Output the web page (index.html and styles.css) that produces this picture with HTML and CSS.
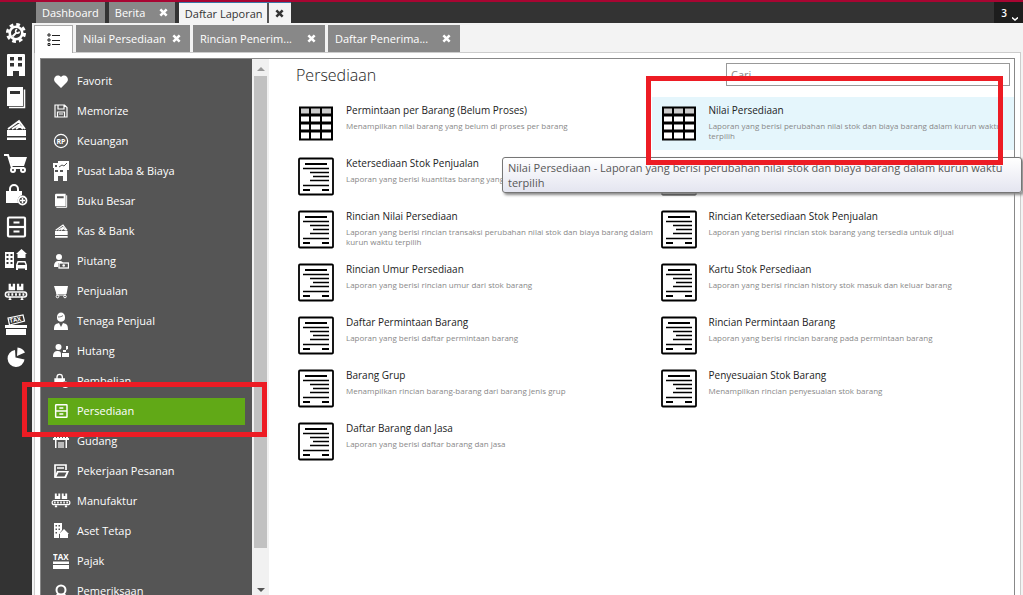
FILE: index.html
```html
<!DOCTYPE html>
<html lang="id">
<head>
<meta charset="utf-8">
<title>Daftar Laporan - Persediaan</title>
<link rel="stylesheet" href="styles.css">
</head>
<body>
<svg class="sprite" aria-hidden="true">
  <symbol id="gear" viewBox="0 0 24 24"><circle cx="12" cy="12" r="8.500" fill="none" stroke="currentColor" stroke-width="3" stroke-dasharray="3.700 2.975"/><circle cx="12" cy="12" r="6.300" fill="none" stroke="currentColor" stroke-width="2.600"/><path d="M8.500 15.500l4-4" fill="none" stroke="currentColor" stroke-width="2"/><path d="M15.500 10.500a2 2 0 1 1-2.300-2.300" fill="none" stroke="currentColor" stroke-width="1.600"/></symbol>
  <symbol id="building" viewBox="0 0 24 24"><path fill="currentColor" fill-rule="evenodd" d="M4 1h16q1 0 1 1v21h-6v-5H9v5H3V2q0-1 1-1zM6 4v3.500h4V4zm8 0v3.500h4V4zm-8 6v3.500h4V10zm8 0v3.500h4V10z"/></symbol>
  <symbol id="book" viewBox="0 0 24 24"><path fill="currentColor" fill-rule="evenodd" d="M5 1h14v19H3V3q0-2 2-2zm1 4v3h10V5z"/><path d="M20.500 3.500V21.500H5" fill="none" stroke="currentColor" stroke-width="1.500"/></symbol>
  <symbol id="cash" viewBox="0 0 24 24"><path fill="currentColor" d="M3 12h19v6H3zM3 19.500h19V22H3z"/><path d="M4 11l11-8 6 8M8 11l8-5M12 11l4-3 3 3" fill="none" stroke="currentColor" stroke-width="1.800"/></symbol>
  <symbol id="cart" viewBox="0 0 24 24"><path fill="currentColor" d="M5 6h18l-3 9H8z"/><path d="M0 4h4l4 13h12" fill="none" stroke="currentColor" stroke-width="2"/><circle cx="9" cy="19" r="2" fill="none" stroke="currentColor" stroke-width="2"/><circle cx="19" cy="19" r="2" fill="none" stroke="currentColor" stroke-width="2"/></symbol>
  <symbol id="bag" viewBox="0 0 24 24"><path fill="currentColor" d="M2 8h16v4a6 6 0 0 0-4 8H2z"/><path d="M6 9V6a4 4 0 0 1 8 0v3" fill="none" stroke="currentColor" stroke-width="2"/><circle cx="18.500" cy="17.500" r="4" fill="none" stroke="currentColor" stroke-width="1.800"/><path d="M18.500 15v5M16 17.500h5" stroke="currentColor" stroke-width="1.500"/></symbol>
  <symbol id="cabinet" viewBox="0 0 24 24"><g fill="none" stroke="currentColor"><rect x="4" y="2.500" width="17" height="19" rx="1" stroke-width="2.200"/><path d="M4 12h17" stroke-width="2.200"/><path d="M9.500 7.500h6M9.500 16.500h6" stroke-width="2"/></g></symbol>
  <symbol id="assets" viewBox="0 0 24 24"><path fill="currentColor" fill-rule="evenodd" d="M1 4h9v16H1zM2.500 6v2h2V6zm4 0v2h2V6zm-4 4v2h2v-2zm4 0v2h2v-2zm-4 4v2h2v-2zm4 0v2h2v-2zM17.500 1L23 6h-1.500v4h-8V6H12zM13.500 13h8l1.500 4v5h-2v-1.500h-7V22h-2v-5zm1 1.500l-1 2.500h8l-1-2.500z"/></symbol>
  <symbol id="conveyor" viewBox="0 0 26 24"><path fill="currentColor" d="M5 3h2.500v3h2V3H12v7H5zM14 3h2.500v3h2V3H21v7h-7z"/><rect x="1.500" y="12" width="23" height="5.500" rx="2.700" fill="none" stroke="currentColor" stroke-width="1.600"/><path d="M4 14.700h19" stroke="currentColor" stroke-width="2.600" stroke-dasharray="2 2"/><path d="M5 20h3M18 20h3M6.500 17v3M19.500 17v3" stroke="currentColor" stroke-width="1.500"/></symbol>
  <symbol id="taxbox" viewBox="0 0 24 24"><path d="M4 5l15-3 1.500 6-15 4z" fill="none" stroke="currentColor" stroke-width="1.200"/><text x="6" y="10" class="glyph-text" transform="rotate(-12 6 10)" font-size="6">TAX</text><path fill="currentColor" d="M1 12h22v3H1zM2 16h20v6H2z"/></symbol>
  <symbol id="pie" viewBox="0 0 24 24"><path fill="currentColor" d="M11 5a8.500 8.500 0 1 0 9.500 9.500l-9-2zM13.500 2.500a9 9 0 0 1 7.500 5l-8 3.500z"/></symbol>
  <symbol id="heart" viewBox="0 0 16 16"><path fill="currentColor" d="M8 15L2 9C-1 5 4 0 8 4c4-4 9 1 6 5z"/></symbol>
  <symbol id="floppy" viewBox="0 0 16 16"><path d="M2 2h9.500L14 4.500V14H2zM5 2v4h6V2M4.500 14V9h7v5M6 11h4" fill="none" stroke="currentColor" stroke-width="1.200"/></symbol>
  <symbol id="rupiah" viewBox="0 0 16 16"><circle cx="8" cy="8" r="6.600" fill="none" stroke="currentColor" stroke-width="1.200"/><text x="3.500" y="10.500" class="glyph-text" font-size="7">RP</text></symbol>
  <symbol id="profit" viewBox="0 0 16 20"><path fill="currentColor" fill-rule="evenodd" d="M0 2h5V0h11v9h-2v11h-4v-5H5v5H1V7H0zM2 4v2h2V4zm0 5v2h3V9zm5 0v2h3V9z"/><path d="M6 6l3-2 2 1 3-3" fill="none" stroke="#555" stroke-width="1"/></symbol>
  <symbol id="receive" viewBox="0 0 16 16"><circle cx="6" cy="4" r="3" fill="currentColor"/><path fill="currentColor" d="M1 14c0-5 2-6 5-6 2 0 3 0 4 2H5v4z"/><rect x="6" y="10" width="9.500" height="5" fill="none" stroke="currentColor" stroke-width="1.300"/><circle cx="10.700" cy="12.500" r="1.300" fill="currentColor"/></symbol>
  <symbol id="basket" viewBox="0 0 16 16"><path fill="currentColor" d="M1 3h14l-1.500 8H3.500z"/><path d="M3 4l1 8h9" fill="none" stroke="currentColor"/><circle cx="4.500" cy="13.500" r="1.300" fill="none" stroke="currentColor"/><circle cx="12" cy="13.500" r="1.300" fill="none" stroke="currentColor"/></symbol>
  <symbol id="agent" viewBox="0 0 16 18"><path fill="currentColor" d="M4 5c0-6 8-6 8 0v1c0 5-8 5-8 0zM1 18c0-5 1-6 5-7l2 4 2-4c4 1 5 2 5 7z"/><path d="M5 5c2 0 4-.500 5-1.500" fill="none" stroke="#555" stroke-width=".8"/></symbol>
  <symbol id="debt" viewBox="0 0 16 16"><circle cx="5.500" cy="4" r="3" fill="currentColor"/><path fill="currentColor" d="M0 14c0-5 2-6 5-6 2 0 3 1 3 3v3zM9 10h7v4H9zM10 7h3v2h-3zM13 3h2v3l-2 1z"/></symbol>
  <symbol id="garage" viewBox="0 0 16 16"><path d="M1 3.500h14" stroke="currentColor" stroke-width="3" stroke-dasharray="2 1"/><path d="M0 5h16v2H0zM2 7h1.500v8H2zM12.500 7H14v8h-1.500z" fill="currentColor"/><path d="M5 9h6v6H5z" fill="#bbb"/></symbol>
  <symbol id="folder" viewBox="0 0 16 16"><path d="M2 14V2h11v5M4 5h7" fill="none" stroke="currentColor" stroke-width="1.700"/><path fill="currentColor" fill-rule="evenodd" d="M4 8h12l-3 7H1zm1.500 1.500L3.500 13.500h8l2-4z"/></symbol>
  <symbol id="house" viewBox="0 0 16 16"><path fill="currentColor" fill-rule="evenodd" d="M1 0h8v7l-3 4v4H1zM2.500 2v1.500H4V2zm3 0v1.500H7V2zm-3 3.500V7H4V5.500zm3 0V7H7V5.500zm-3 3.500v1.500H4V9zM11 6l5 5h-1v4H7v-4H6z"/></symbol>
  <symbol id="tax" viewBox="0 0 16 16"><text x="0" y="7" class="glyph-text" font-size="8">TAX</text><path fill="currentColor" d="M0 8.500h16V11H0zM0 12h16v4H0z"/></symbol>
  <symbol id="lens" viewBox="0 0 16 16"><circle cx="8" cy="7" r="4.500" fill="none" stroke="currentColor" stroke-width="2"/><path d="M5 11l-3 4M11 11l3 4" stroke="currentColor" stroke-width="2"/></symbol>
  <symbol id="close" viewBox="0 0 10 10"><path d="M1.500 1.500l7 7M8.500 1.500l-7 7" stroke="currentColor" stroke-width="2.800"/></symbol>
  <symbol id="list" viewBox="0 0 14 14"><path d="M5 2.500h8M5 7.500h8M5 11.500h8" stroke="currentColor"/><path d="M1 1h2v2H1zM1 6h2v2H1zM1 10.500h2v2H1z" fill="none" stroke="currentColor"/></symbol>
  <symbol id="table" viewBox="0 0 36 38"><path fill="#000" d="M1 2h34v34H1z"/><path fill="#ccc" d="M3 4h8v5H3zM13 4h9v5h-9zM24 4h9v5h-9z"/><path fill="#fff" d="M3 12h8v5H3zM13 12h9v5h-9zM24 12h9v5h-9zM3 20h8v5H3zM13 20h9v5h-9zM24 20h9v5h-9zM3 28h8v6H3zM13 28h9v6h-9zM24 28h9v6h-9z"/></symbol>
  <symbol id="doc" viewBox="0 0 36 38"><rect x="1" y="1" width="34" height="36" rx="1" fill="#fff" stroke="#000" stroke-width="1.800"/><path d="M7 6.500h22M5 32.500h7M24 32.500h7" stroke="#000" stroke-width="2"/><path d="M5 11h26M12 15h19M15 19h16M12 23h19M5 28h26" stroke="#000" stroke-width="1.500"/></symbol>
</svg>

<div class="app">
  <header class="topbar">
    <nav class="tabs" aria-label="Halaman">
      <div class="tab"><button class="tab-label">Dashboard</button></div>
      <div class="tab tab-wide"><button class="tab-label">Berita</button><button class="tab-close" aria-label="Tutup Berita"><svg><use href="#close"/></svg></button></div>
      <div class="tab tab-active"><button class="tab-label">Daftar Laporan</button><button class="tab-close" aria-label="Tutup Daftar Laporan"><svg><use href="#close"/></svg></button></div>
    </nav>
    <button class="counter">3<svg class="chevron" viewBox="0 0 6 4"><path d="M0 .5l3 2.500 3-2.500" fill="none" stroke="currentColor" stroke-width="1.500"/></svg></button>
  </header>

  <div class="body">
    <nav class="rail" aria-label="Modul">
      <div class="rail-items">
        <button aria-label="Pengaturan"><svg><use href="#gear"/></svg></button>
        <button aria-label="Perusahaan"><svg><use href="#building"/></svg></button>
        <button aria-label="Buku Besar"><svg><use href="#book"/></svg></button>
        <button aria-label="Kas dan Bank"><svg><use href="#cash"/></svg></button>
        <button aria-label="Penjualan"><svg><use href="#cart"/></svg></button>
        <button aria-label="Pembelian"><svg><use href="#bag"/></svg></button>
        <button aria-label="Persediaan"><svg><use href="#cabinet"/></svg></button>
        <button aria-label="Aset Tetap"><svg><use href="#assets"/></svg></button>
        <button aria-label="Manufaktur"><svg><use href="#conveyor"/></svg></button>
        <button aria-label="Pajak"><svg><use href="#taxbox"/></svg></button>
        <button aria-label="Laporan"><svg><use href="#pie"/></svg></button>
      </div>
    </nav>

    <main class="workspace">
      <div class="subtabs">
        <button class="subtab-list" aria-label="Daftar"><svg><use href="#list"/></svg></button>
        <div class="subtab subtab-short"><button class="tab-label">Nilai Persediaan</button><button class="tab-close" aria-label="Tutup"><svg><use href="#close"/></svg></button></div>
        <div class="subtab"><button class="tab-label">Rincian Penerim...</button><button class="tab-close" aria-label="Tutup"><svg><use href="#close"/></svg></button></div>
        <div class="subtab"><button class="tab-label">Daftar Penerima...</button><button class="tab-close" aria-label="Tutup"><svg><use href="#close"/></svg></button></div>
      </div>

      <div class="sheet">
        <div class="panel">
          <nav class="menu" aria-label="Kategori laporan">
            <a href="#favorit"><svg><use href="#heart"/></svg>Favorit</a>
            <a href="#memorize"><svg><use href="#floppy"/></svg>Memorize</a>
            <a href="#keuangan"><svg><use href="#rupiah"/></svg>Keuangan</a>
            <a href="#laba"><svg class="tall"><use href="#profit"/></svg>Pusat Laba &amp; Biaya</a>
            <a href="#buku"><svg><use href="#book"/></svg>Buku Besar</a>
            <a href="#kas"><svg><use href="#cash"/></svg>Kas &amp; Bank</a>
            <a href="#piutang"><svg><use href="#receive"/></svg>Piutang</a>
            <a href="#penjualan"><svg><use href="#basket"/></svg>Penjualan</a>
            <a href="#tenaga"><svg class="tall"><use href="#agent"/></svg>Tenaga Penjual</a>
            <a href="#hutang"><svg><use href="#debt"/></svg>Hutang</a>
            <a href="#pembelian"><svg><use href="#bag"/></svg>Pembelian</a>
            <a href="#persediaan" class="current" aria-current="page"><svg><use href="#cabinet"/></svg>Persediaan</a>
            <a href="#gudang"><svg><use href="#garage"/></svg>Gudang</a>
            <a href="#pekerjaan"><svg><use href="#folder"/></svg>Pekerjaan Pesanan</a>
            <a href="#manufaktur"><svg class="broad"><use href="#conveyor"/></svg>Manufaktur</a>
            <a href="#aset"><svg><use href="#house"/></svg>Aset Tetap</a>
            <a href="#pajak"><svg><use href="#tax"/></svg>Pajak</a>
            <a href="#pemeriksaan"><svg><use href="#lens"/></svg>Pemeriksaan</a>
          </nav>
          <div class="scrollbar" aria-hidden="true"><span class="arrow up"></span><span class="thumb"></span><span class="arrow down"></span></div>

          <section class="reports">
            <div class="reports-head">
              <h1>Persediaan</h1>
              <input class="search" type="search" placeholder="Cari..." aria-label="Cari">
            </div>
            <div class="grid">
              <a class="report" href="#r1"><svg><use href="#table"/></svg><div><h2>Permintaan per Barang (Belum Proses)</h2><p>Menampilkan nilai barang yang belum di proses per barang</p></div></a>
              <a class="report hover" href="#r2"><svg><use href="#table"/></svg><div><h2>Nilai Persediaan</h2><p>Laporan yang berisi perubahan nilai stok dan biaya barang dalam kurun waktu terpilih</p></div></a>
              <a class="report" href="#r3"><svg><use href="#doc"/></svg><div><h2>Ketersediaan Stok Penjualan</h2><p>Laporan yang berisi kuantitas barang yang</p></div></a>
              <a class="report" href="#r4" aria-label="Laporan persediaan"><svg><use href="#doc"/></svg></a>
              <a class="report" href="#r5"><svg><use href="#doc"/></svg><div><h2>Rincian Nilai Persediaan</h2><p>Laporan yang berisi rincian transaksi perubahan nilai stok dan biaya barang dalam kurun waktu terpilih</p></div></a>
              <a class="report" href="#r6"><svg><use href="#doc"/></svg><div><h2>Rincian Ketersediaan Stok Penjualan</h2><p>Laporan yang berisi rincian stok barang yang tersedia untuk dijual</p></div></a>
              <a class="report" href="#r7"><svg><use href="#doc"/></svg><div><h2>Rincian Umur Persediaan</h2><p>Laporan yang berisi rincian umur dari stok barang</p></div></a>
              <a class="report" href="#r8"><svg><use href="#doc"/></svg><div><h2>Kartu Stok Persediaan</h2><p>Laporan yang berisi rincian history stok masuk dan keluar barang</p></div></a>
              <a class="report" href="#r9"><svg><use href="#doc"/></svg><div><h2>Daftar Permintaan Barang</h2><p>Laporan yang berisi daftar permintaan barang</p></div></a>
              <a class="report" href="#r10"><svg><use href="#doc"/></svg><div><h2>Rincian Permintaan Barang</h2><p>Laporan yang berisi rincian barang pada permintaan barang</p></div></a>
              <a class="report" href="#r11"><svg><use href="#doc"/></svg><div><h2>Barang Grup</h2><p>Menampilkan rincian barang-barang dari barang jenis grup</p></div></a>
              <a class="report" href="#r12"><svg><use href="#doc"/></svg><div><h2>Penyesuaian Stok Barang</h2><p>Menampilkan rincian penyesuaian stok barang</p></div></a>
              <a class="report" href="#r13"><svg><use href="#doc"/></svg><div><h2>Daftar Barang dan Jasa</h2><p>Laporan yang berisi daftar barang dan jasa</p></div></a>
            </div>
          </section>
        </div>
      </div>
    </main>
  </div>

  <div class="tooltip" role="tooltip">Nilai Persediaan - Laporan yang berisi perubahan nilai stok dan biaya barang dalam kurun waktu terpilih</div>
  <div class="mark mark-menu"></div>
  <div class="mark mark-report"></div>
</div>
</body>
</html>
```

FILE: styles.css
```css
* { box-sizing: border-box; }
body { margin: 0; font-family: "Open Sans", "Noto Sans", sans-serif; font-size: 11px; background: #f3f3f3; color: #222; }
button { border: 0; padding: 0; background: none; color: inherit; font: inherit; white-space: nowrap; }
a { color: inherit; text-decoration: none; }
h1, h2, p { margin: 0; font-weight: 400; }
.sprite { display: none; }
.glyph-text { font-family: "Open Sans", sans-serif; font-weight: 700; fill: currentColor; }

.app { position: relative; display: flex; flex-direction: column; height: 100vh; overflow: hidden; }

.topbar { display: flex; justify-content: space-between; flex: none; height: 23px; padding-left: 36px; background: #333; border-top: 2px solid #a80532; }
.tabs { display: flex; gap: 4px; font-size: 11px; }
.tab { display: flex; align-items: center; padding: 0 6px; background: #888; color: #fff; }
.tab-wide { width: 66px; justify-content: space-between; padding-right: 5px; }
.tab-active { background: #f3f3f3; color: #333; padding-right: 0; border-top: 1px solid #3c78a8; }
.tab-active .tab-close { align-self: stretch; width: 24px; margin-left: 4px; border-left: 2px solid #555; }
.tab-close { display: flex; align-items: center; justify-content: center; width: 12px; }
.tab-close svg { width: 9px; height: 9px; }
.counter { display: flex; align-items: center; justify-content: flex-end; gap: 5px; width: 29px; padding-right: 5px; background: #1d1d1d; color: #fff; font-weight: 600; font-size: 10px; }
.chevron { width: 6px; height: 4px; margin-top: 12px; }

.body { display: flex; flex: 1; min-height: 0; }
.rail { flex: none; width: 32px; background: #333; color: #fff; }
.rail-items { display: flex; flex-direction: column; justify-content: space-between; align-items: center; height: 344px; }
.rail button { display: flex; align-items: center; width: 24px; height: 20px; }
.rail svg { flex: none; width: 24px; height: 24px; }

.workspace { display: flex; flex-direction: column; flex: 1; min-width: 0; padding: 2px 2px 0 2px; }
.subtabs { display: flex; gap: 3px; height: 27px; }
.subtab-list { display: flex; align-items: center; justify-content: center; width: 39px; height: 28px; background: #fff; border: 1px solid #aaa; border-bottom: 0; z-index: 1; }
.subtab-list svg { width: 14px; height: 14px; }
.subtab { display: flex; align-items: center; justify-content: space-between; width: 132px; padding: 0 8px 0 7px; background: #888; color: #fff; }
.subtab-short { width: 114px; }

.sheet { flex: 1; min-height: 0; padding: 5px 5px 0 5px; background: #fff; border: 1px solid #ccc; border-bottom: 0; }
.panel { display: flex; height: 100%; border: 1px solid #888; border-bottom: 0; }
.menu { display: flex; flex-direction: column; gap: 3px; flex: none; width: 211px; padding: 9px 7px 0; background: #555; color: #fff; overflow: hidden; }
.menu a { display: flex; align-items: center; flex: none; gap: 8px; height: 27px; padding: 0 0 2px 5px; line-height: 14px; }
.menu svg { flex: none; width: 16px; height: 16px; }
.menu svg.tall { height: 20px; }
.menu svg.broad { width: 20px; height: 19px; margin: 0 -2px; }
.menu .current { background: #61a917; }

.scrollbar { display: flex; flex-direction: column; flex: none; width: 17px; padding: 0 2px; background: #f1f1f1; }
.thumb { flex: 1; margin-bottom: 40px; background: #c1c1c1; }
.arrow { border: 4px solid transparent; align-self: center; width: 8px; height: 0; }
.up { border-bottom-color: #999; margin: 4px 0 5px; }
.down { border-top-color: #555; margin-bottom: -1px; }

.reports { flex: 1; min-width: 0; padding-left: 20px; }
.reports-head { display: flex; justify-content: space-between; align-items: flex-start; padding: 4px 4px 10px 7px; }
h1 { font-weight: 300; font-size: 16px; line-height: 24px; }
.search { width: 284px; height: 23px; padding: 0 4px; border: 1px solid #999; font: inherit; }
.search::placeholder { color: #888; }
.grid { display: grid; grid-template-columns: 1fr 1fr; grid-auto-rows: 53px; }
.report { display: flex; gap: 12px; padding: 7px 0 0 9px; }
.report svg { flex: none; width: 36px; height: 39px; }
.report h2 { font-size: 10px; line-height: 13px; }
.report p { margin: 4px -6px 0 0; font-size: 8px; line-height: 10px; color: #888; }
.hover { background: #e5f6fc; }

.tooltip { position: absolute; left: 502px; right: 1px; top: 157px; padding: 2px 5px; border: 1px solid #767676; border-radius: 3px; background: linear-gradient(#fff, #e4e5f0); box-shadow: 2px 2px 3px #888; color: #575757; font-size: 11px; line-height: 15px; }
.mark { position: absolute; border: 5px solid #ed1c24; }
.mark-menu { left: 22px; top: 382px; width: 245px; height: 55px; }
.mark-report { left: 646px; top: 76px; width: 357px; height: 89px; }
```
